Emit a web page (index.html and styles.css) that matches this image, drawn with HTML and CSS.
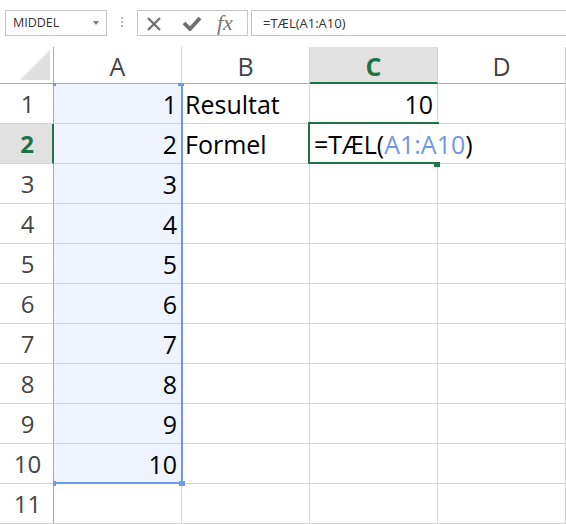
FILE: index.html
```html
<!DOCTYPE html>
<html lang="da">
<head>
<meta charset="utf-8">
<title>Excel TÆL</title>
<link rel="stylesheet" href="styles.css">
</head>
<body>
<div class="topbar">
  <div class="namebox">
    <span class="name">MIDDEL</span>
    <span class="caret"></span>
  </div>
  <div class="dots"><i></i><i></i><i></i></div>
  <div class="fxbox">
    <svg class="ico-x" width="16" height="16" viewBox="0 0 16 16"><path d="M2 2 L14 14 M14 2 L2 14" stroke="#6e6e6e" stroke-width="2.2" fill="none"/></svg>
    <svg class="ico-check" width="20" height="16" viewBox="0 0 20 16"><path d="M2 8 L8 14 L18 3" stroke="#6e6e6e" stroke-width="3.8" fill="none" stroke-linejoin="miter"/></svg>
    <span class="fx">fx</span>
  </div>
  <div class="formula">=TÆL(A1:A10)</div>
</div>

<div class="sheet">
  <div class="corner"><svg width="53" height="36" viewBox="0 0 53 36"><polygon points="50,3 50,33 20,33" fill="#dfdfdf"/></svg></div>
  <div class="ch">A</div>
  <div class="ch">B</div>
  <div class="ch ch-on">C</div>
  <div class="ch">D</div>

  <div class="rh">1</div><div class="c sel num">1</div><div class="c">Resultat</div><div class="c num">10</div><div class="c"></div>
  <div class="rh rh-on">2</div><div class="c sel num">2</div><div class="c">Formel</div><div class="c edit">=TÆL(<span class="ref">A1:A10</span>)</div><div class="c"></div>
  <div class="rh">3</div><div class="c sel num">3</div><div class="c"></div><div class="c"></div><div class="c"></div>
  <div class="rh">4</div><div class="c sel num">4</div><div class="c"></div><div class="c"></div><div class="c"></div>
  <div class="rh">5</div><div class="c sel num">5</div><div class="c"></div><div class="c"></div><div class="c"></div>
  <div class="rh">6</div><div class="c sel num">6</div><div class="c"></div><div class="c"></div><div class="c"></div>
  <div class="rh">7</div><div class="c sel num">7</div><div class="c"></div><div class="c"></div><div class="c"></div>
  <div class="rh">8</div><div class="c sel num">8</div><div class="c"></div><div class="c"></div><div class="c"></div>
  <div class="rh">9</div><div class="c sel num">9</div><div class="c"></div><div class="c"></div><div class="c"></div>
  <div class="rh">10</div><div class="c sel num">10</div><div class="c"></div><div class="c"></div><div class="c"></div>
  <div class="rh">11</div><div class="c"></div><div class="c"></div><div class="c"></div><div class="c"></div>

  <div class="range"></div>
  <div class="rq rq-tl"></div>
  <div class="rq rq-tr"></div>
  <div class="rq rq-bl"></div>
  <div class="rq rq-br"></div>
  <div class="active"></div>
  <div class="handle"></div>
</div>
</body>
</html>
```

FILE: styles.css
```css
* { box-sizing: border-box; }
html, body { margin: 0; padding: 0; background: #fff; }
body {
  width: 566px;
  height: 524px;
  overflow: hidden;
  font-family: "Open Sans", "Noto Sans", sans-serif;
}

.topbar {
  display: flex;
  align-items: flex-start;
  padding: 10px 0 0 5px;
  height: 36px;
}
.namebox {
  width: 102px;
  height: 26px;
  border: 1px solid #c6c6c6;
  display: flex;
  align-items: center;
  padding-left: 7px;
  position: relative;
}
.name {
  font-size: 12.5px;
  line-height: 24px;
  color: #333;
}
.caret {
  position: absolute;
  left: 87px;
  top: 10px;
  width: 0;
  height: 0;
  border-left: 3.5px solid transparent;
  border-right: 3.5px solid transparent;
  border-top: 4px solid #7a7a7a;
}
.dots {
  width: 3px;
  margin: 7px 13px 0 14px;
  display: flex;
  flex-direction: column;
  gap: 2px;
}
.dots i {
  display: block;
  width: 2px;
  height: 2px;
  background: #b4b4b4;
}
.fxbox {
  width: 111px;
  height: 26px;
  border: 1px solid #c6c6c6;
  position: relative;
}
.ico-x { position: absolute; left: 8px; top: 5px; }
.ico-check { position: absolute; left: 44px; top: 4px; }
.fx {
  position: absolute;
  left: 79px;
  top: 0px;
  font-family: "Liberation Serif", "DejaVu Serif", serif;
  font-style: italic;
  font-size: 22px;
  line-height: 24px;
  color: #777;
}
.formula {
  flex: 1;
  margin-left: 3px;
  margin-right: -10px;
  height: 26px;
  border: 1px solid #c6c6c6;
  padding-left: 11px;
  font-size: 13px;
  line-height: 24px;
  color: #333;
}

.sheet {
  margin-top: 11px;
  position: relative;
  display: grid;
  grid-template-columns: 54px repeat(4, 128px);
  grid-template-rows: 37px repeat(11, 40px);
}
.corner {
  border-right: 1px solid #ababab;
  border-bottom: 1px solid #ababab;
}
.corner svg { display: block; }
.ch {
  border-right: 1px solid #d4d4d4;
  border-bottom: 1px solid #ababab;
  text-align: center;
  font-size: 25px;
  line-height: 36px;
  padding-top: 1px;
  color: #444;
}
.ch-on {
  background: #e1e1e1;
  border-bottom: 2px solid #217346;
  color: #217346;
  font-weight: 700;
}
.rh {
  border-right: 1px solid #ababab;
  border-bottom: 1px solid #d4d4d4;
  text-align: center;
  font-size: 24px;
  line-height: 40px;
  color: #444;
  padding-left: 2px;
}
.rh-on {
  background: #e1e1e1;
  border-right: 2px solid #217346;
  color: #217346;
  font-weight: 700;
}
.c {
  border-right: 1px solid #d4d4d4;
  border-bottom: 1px solid #d4d4d4;
  font-size: 25px;
  line-height: 40px;
  color: #000;
  padding: 0 4px 0 3px;
  white-space: nowrap;
}
.num { text-align: right; }
.sel { background: #eef3fd; }
.edit {
  overflow: visible;
  border-right-color: #fff;
  position: relative;
  z-index: 1;
  padding-left: 4px;
}
.ref { color: #7096e8; }

.range {
  position: absolute;
  left: 54px;
  top: 37px;
  width: 129px;
  height: 400px;
  border-right: 2px solid #6e9be9;
  border-bottom: 2px solid #6e9be9;
  pointer-events: none;
}
.rq { position: absolute; background: #6e9be9; }
.rq-tl { left: 53px; top: 36px; width: 3px; height: 3px; }
.rq-tr { left: 178px; top: 36px; width: 6px; height: 3px; }
.rq-bl { left: 53px; top: 434px; width: 3px; height: 5px; }
.rq-br { left: 179px; top: 434px; width: 6px; height: 5px; }

.active {
  position: absolute;
  left: 308px;
  top: 75px;
  width: 131px;
  height: 42px;
  border-top: 2px solid #217346;
  border-left: 2px solid #217346;
  z-index: 2;
}
.active::after {
  content: "";
  position: absolute;
  left: -2px;
  bottom: 0;
  width: 126px;
  height: 2px;
  background: #217346;
}
.handle {
  position: absolute;
  left: 434px;
  top: 115px;
  width: 6px;
  height: 5px;
  background: #217346;
  z-index: 3;
}
```
